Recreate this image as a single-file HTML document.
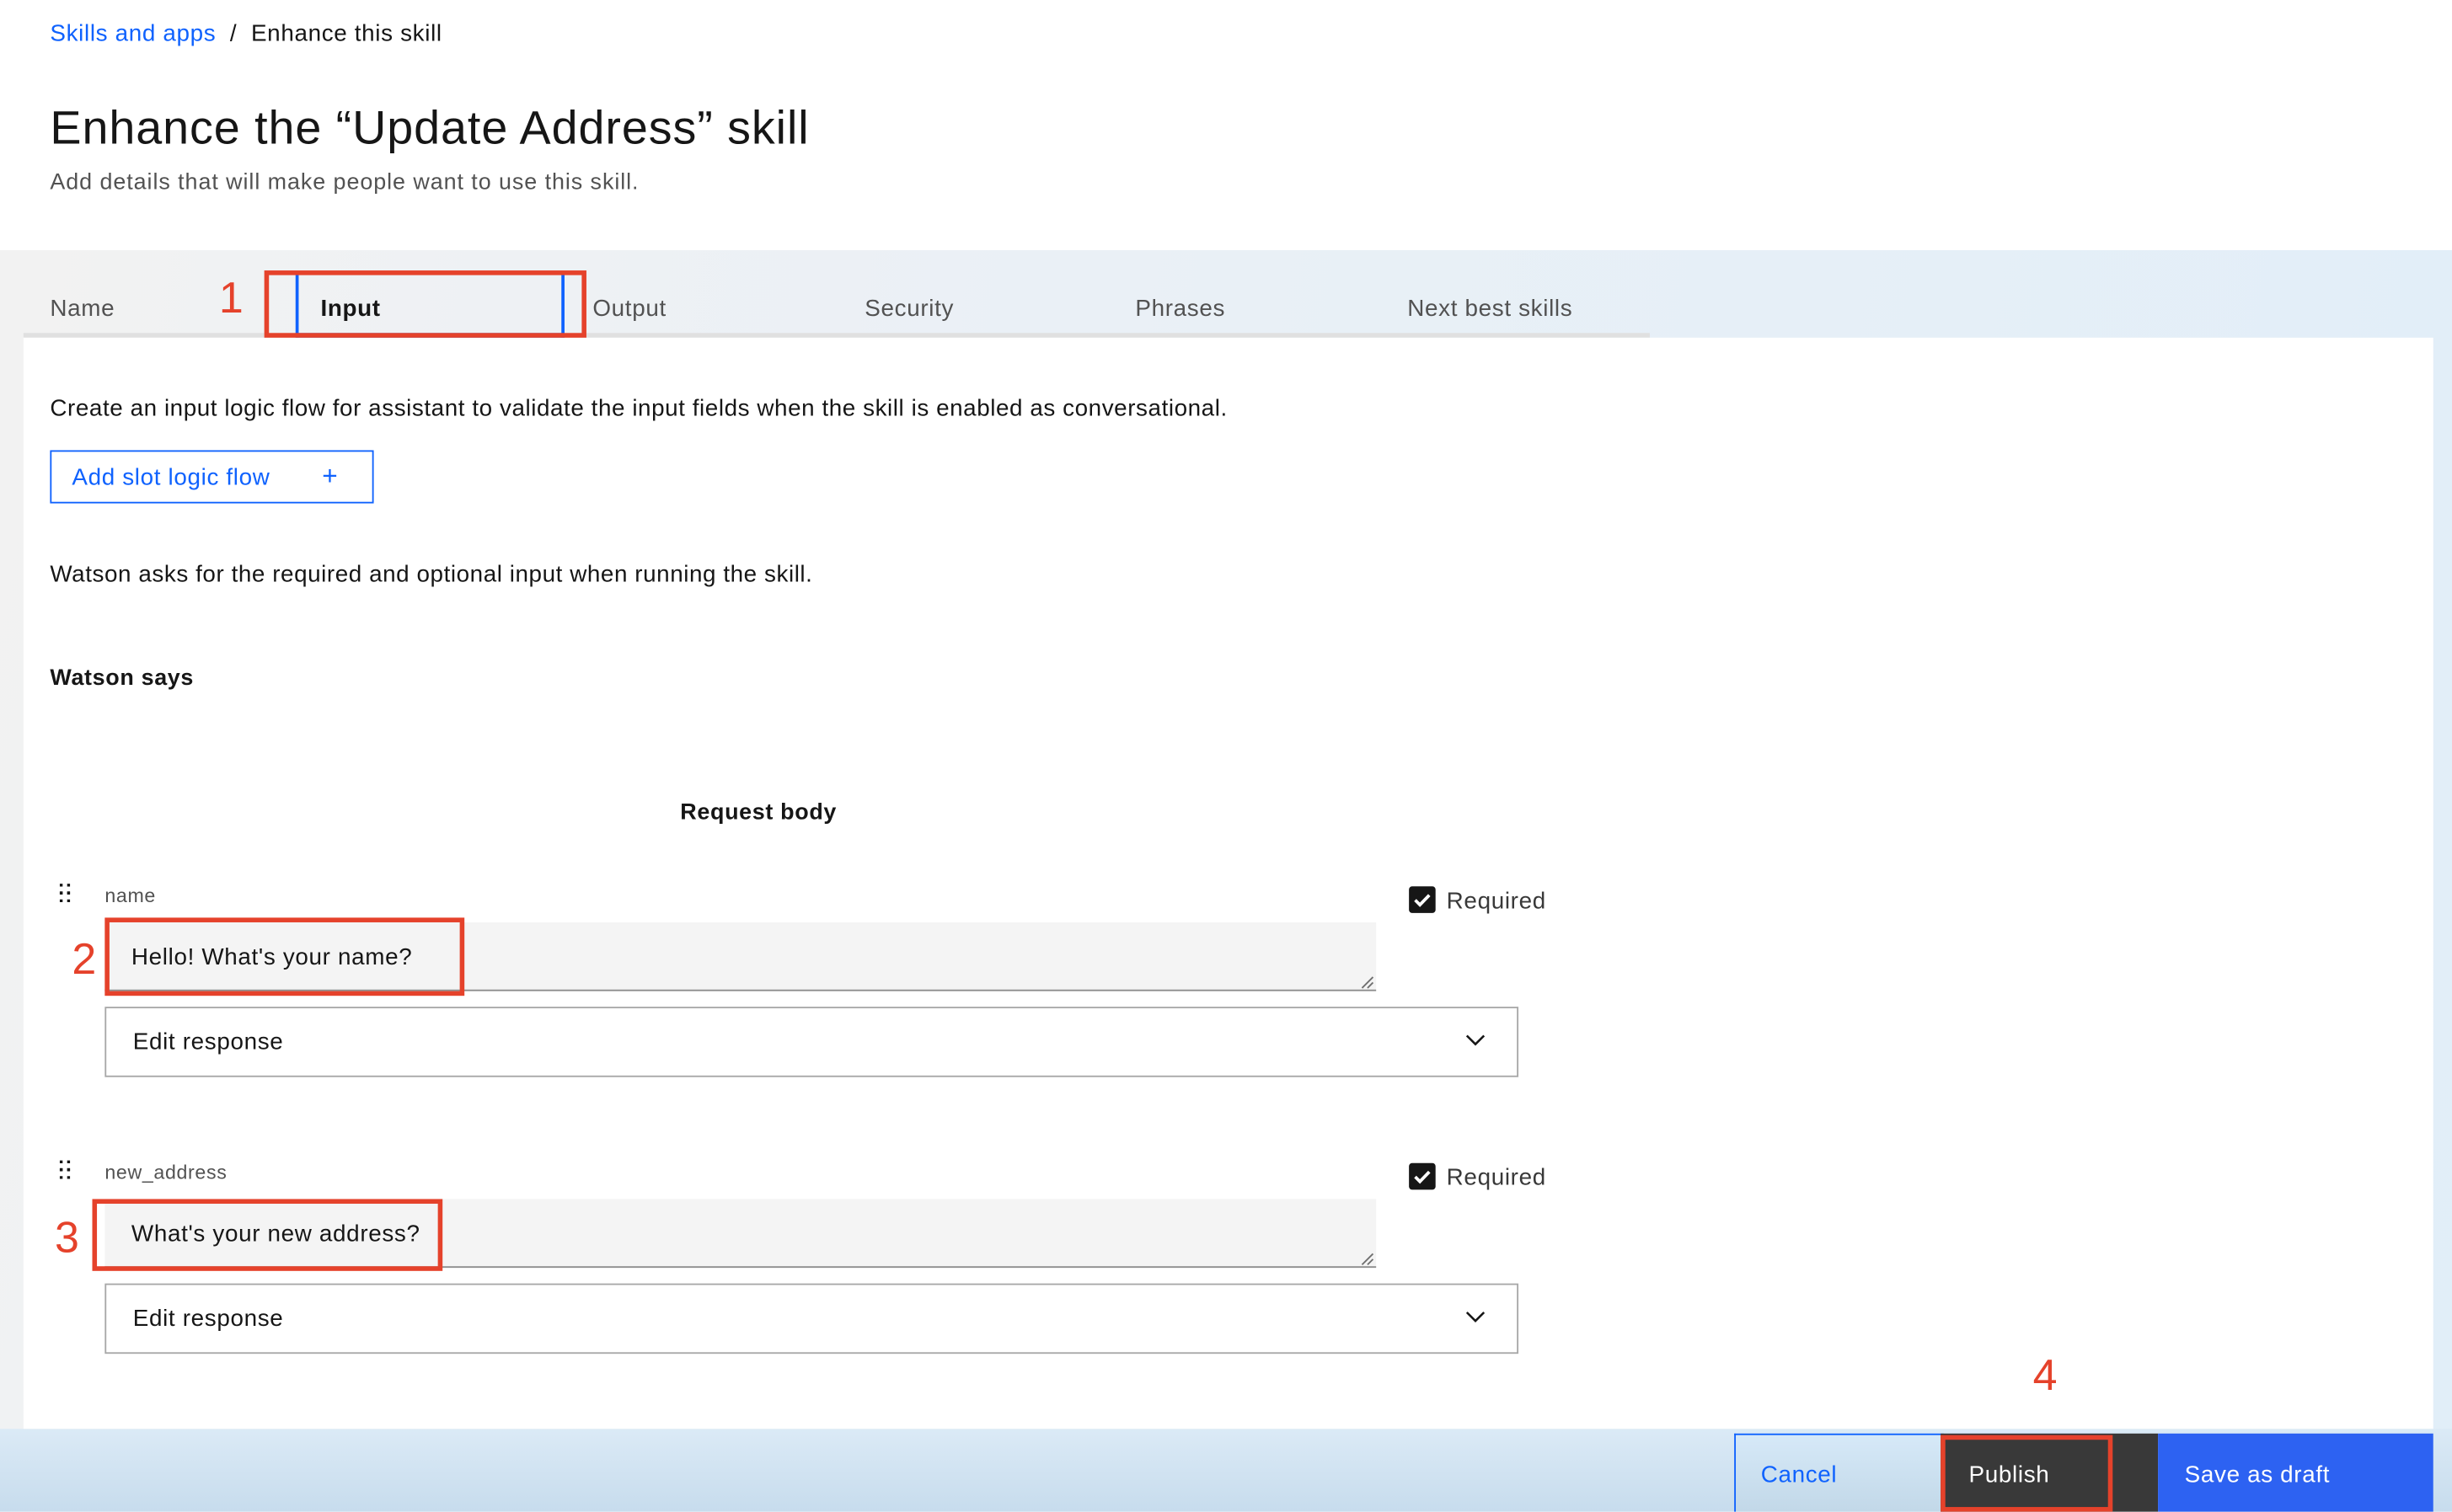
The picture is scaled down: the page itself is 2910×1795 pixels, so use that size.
<!DOCTYPE html>
<html><head><meta charset="utf-8"><style>
*{box-sizing:border-box;margin:0;padding:0}
html,body{width:2910px;height:1794px;overflow:hidden;background:#fff}
#w{position:absolute;left:0;top:0;width:1568px;height:967px;transform:scale(1.85587);transform-origin:0 0;font-family:"Liberation Sans",sans-serif;color:#161616;letter-spacing:0.35px}
.a{position:absolute;white-space:nowrap}
.red{position:absolute;border:3px solid #e5422b}
.num{position:absolute;color:#e5422b;font-size:28px;line-height:1;letter-spacing:0}
.ta{position:absolute;background:#f4f4f4;border-bottom:1.5px solid #8d8d8d}
.dd{position:absolute;border:1.5px solid #a8a8a8;background:#fff}
.cb{position:absolute;width:17px;height:17px;background:#161616;border-radius:2px}
</style></head><body><div id="w">
<div class="a" style="left:32px;top:13px;font-size:15px;color:#0f62fe">Skills and apps</div>
<div class="a" style="left:147px;top:13px;font-size:15px">/&nbsp;&nbsp;Enhance this skill</div>
<div class="a" style="left:32px;top:66px;font-size:30px;letter-spacing:0.5px">Enhance the “Update Address” skill</div>
<div class="a" style="left:32px;top:109px;font-size:14.5px;color:#525252;letter-spacing:0.5px">Add details that will make people want to use this skill.</div>

<div class="a" style="left:0;top:160px;width:1568px;height:807px;background:linear-gradient(100deg,#f2f2f2 0%,#eaf0f6 40%,#e1eef8 100%)"></div>
<div class="a" style="left:0;top:914px;width:1568px;height:53px;background:linear-gradient(180deg,#dbeaf6,#c7dced)"></div>
<div class="a" style="left:15px;top:213px;width:1040px;height:3px;background:#e0e0e0"></div>
<div class="a" style="left:15px;top:216px;width:1541px;height:698px;background:#fff"></div>

<div class="a" style="left:32px;top:189px;font-size:15px;color:#525252">Name</div>
<div class="a" style="left:189px;top:174px;width:172px;height:42px;border-left:2px solid #0f62fe;border-right:2px solid #0f62fe;border-bottom:3px solid #0f62fe"></div>
<div class="a" style="left:205px;top:189px;font-size:15px;font-weight:bold">Input</div>
<div class="a" style="left:379px;top:189px;font-size:15px;color:#525252">Output</div>
<div class="a" style="left:553px;top:189px;font-size:15px;color:#525252">Security</div>
<div class="a" style="left:726px;top:189px;font-size:15px;color:#525252">Phrases</div>
<div class="a" style="left:900px;top:189px;font-size:15px;color:#525252">Next best skills</div>
<div class="red" style="left:169px;top:173px;width:206px;height:43px"></div>
<div class="num" style="left:140px;top:177px">1</div>

<div class="a" style="left:32px;top:253px;font-size:15px;letter-spacing:0.3px">Create an input logic flow for assistant to validate the input fields when the skill is enabled as conversational.</div>
<div class="a" style="left:32px;top:288px;width:207px;height:34px;border:1.5px solid #0f62fe"></div>
<div class="a" style="left:46px;top:297px;font-size:15px;color:#0f62fe">Add slot logic flow</div>
<div class="a" style="left:206px;top:295px;font-size:17px;color:#0f62fe">+</div>
<div class="a" style="left:32px;top:359px;font-size:15px;letter-spacing:0.3px">Watson asks for the required and optional input when running the skill.</div>
<div class="a" style="left:32px;top:426px;font-size:14.5px;font-weight:bold">Watson says</div>
<div class="a" style="left:435px;top:512px;font-size:14.5px;font-weight:bold">Request body</div>

<!-- field 1 -->
<div class="a" style="left:37px;top:565px;font-size:13px;line-height:5px;font-weight:bold">::<br>::</div>
<div class="a" style="left:67px;top:566px;font-size:12.5px;color:#525252">name</div>
<div class="cb" style="left:901px;top:567px"><svg width="17" height="17" viewBox="0 0 17 17"><path d="M4 8.8l3 3 6-6.2" stroke="#fff" stroke-width="2" fill="none"/></svg></div>
<div class="a" style="left:925px;top:568px;font-size:15px;color:#393939">Required</div>
<div class="ta" style="left:67px;top:590px;width:813px;height:44px"></div>
<div class="a" style="left:84px;top:604px;font-size:15px">Hello! What's your name?</div>
<svg class="a" style="left:870px;top:624px" width="9" height="9"><path d="M1 8L8 1M4.5 8L8 4.5" stroke="#6f6f6f" stroke-width="1"/></svg>
<div class="red" style="left:67px;top:587px;width:230px;height:50px"></div>
<div class="num" style="left:46px;top:600px">2</div>
<div class="dd" style="left:67px;top:644px;width:904px;height:45px"></div>
<div class="a" style="left:85px;top:658px;font-size:15px">Edit response</div>
<svg class="a" style="left:937px;top:661px" width="13" height="9"><path d="M1 1.5l5.5 5.5 5.5-5.5" stroke="#161616" stroke-width="1.4" fill="none"/></svg>

<!-- field 2 -->
<div class="a" style="left:37px;top:742px;font-size:13px;line-height:5px;font-weight:bold">::<br>::</div>
<div class="a" style="left:67px;top:743px;font-size:12.5px;color:#525252">new_address</div>
<div class="cb" style="left:901px;top:744px"><svg width="17" height="17" viewBox="0 0 17 17"><path d="M4 8.8l3 3 6-6.2" stroke="#fff" stroke-width="2" fill="none"/></svg></div>
<div class="a" style="left:925px;top:745px;font-size:15px;color:#393939">Required</div>
<div class="ta" style="left:67px;top:767px;width:813px;height:44px"></div>
<div class="a" style="left:84px;top:781px;font-size:15px">What's your new address?</div>
<svg class="a" style="left:870px;top:801px" width="9" height="9"><path d="M1 8L8 1M4.5 8L8 4.5" stroke="#6f6f6f" stroke-width="1"/></svg>
<div class="red" style="left:59px;top:767px;width:224px;height:46px"></div>
<div class="num" style="left:35px;top:778px">3</div>
<div class="dd" style="left:67px;top:821px;width:904px;height:45px"></div>
<div class="a" style="left:85px;top:835px;font-size:15px">Edit response</div>
<svg class="a" style="left:937px;top:838px" width="13" height="9"><path d="M1 1.5l5.5 5.5 5.5-5.5" stroke="#161616" stroke-width="1.4" fill="none"/></svg>

<div class="num" style="left:1300px;top:866px">4</div>
<!-- footer buttons -->
<div class="a" style="left:1109px;top:917px;width:134px;height:50px;border-left:1.5px solid #0f62fe;border-top:1.5px solid #0f62fe;background:linear-gradient(180deg,#d6e9f8,#c2d8e8)"></div>
<div class="a" style="left:1126px;top:935px;font-size:15px;color:#0f62fe">Cancel</div>
<div class="a" style="left:1241px;top:917px;width:139px;height:50px;background:#393939"></div>
<div class="red" style="left:1241px;top:918px;width:110px;height:49px"></div>
<div class="a" style="left:1259px;top:935px;font-size:15px;color:#fff">Publish</div>
<div class="a" style="left:1380px;top:917px;width:176px;height:50px;background:#2d62f2"></div>
<div class="a" style="left:1397px;top:935px;font-size:15px;color:#fff">Save as draft</div>
</div></body></html>
